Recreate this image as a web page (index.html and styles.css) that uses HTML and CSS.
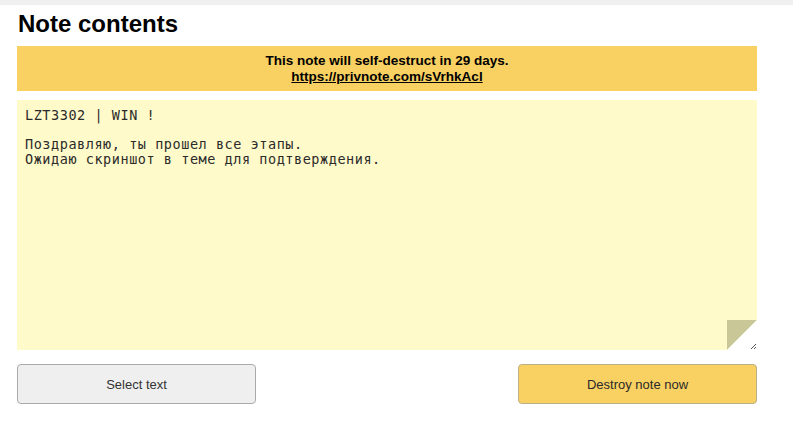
FILE: index.html
```html
<!DOCTYPE html>
<html lang="en">
<head>
    <meta charset="UTF-8">
    <meta name="viewport" content="width=device-width, initial-scale=1.0">
    <title>Note contents</title>
    <link rel="stylesheet" href="styles.css">
</head>
<body>
    <div class="topbar"></div>
    <div class="container">
        <h1>Note contents</h1>
        <div class="notice">
            <div>This note will self-destruct in 29 days.</div>
            <a href="#">https://privnote.com/sVrhkAcl</a>
        </div>
        <div class="note-wrapper">
            <textarea class="note" id="note" readonly>LZT3302 | WIN !

Поздравляю, ты прошел все этапы.
Ожидаю скриншот в теме для подтверждения.</textarea>
            <svg class="fold" width="30" height="30" viewBox="0 0 30 30">
                <polygon points="0,0 30,0 0,30" fill="#c9c697"/>
                <polygon points="30,0 30,30 0,30" fill="#ffffff"/>
                <line x1="24" y1="29" x2="29" y2="24" stroke="#555" stroke-width="1"/>
                <line x1="27" y1="29" x2="29" y2="27" stroke="#555" stroke-width="1"/>
            </svg>
        </div>
        <div class="actions">
            <button class="btn" onclick="selectText()">Select text</button>
            <button class="btn btn-destroy">Destroy note now</button>
        </div>
    </div>

    <script>
        function selectText() {
            document.getElementById('note').select();
        }
    </script>
</body>
</html>
```

FILE: styles.css
```css
* {
    margin: 0;
    padding: 0;
    box-sizing: border-box;
}

body {
    background: white;
    font-family: 'Liberation Sans', Arial, sans-serif;
    color: #000;
}

.topbar {
    height: 5px;
    background: #f0f0f0;
}

.container {
    width: 740px;
    margin-left: 17px;
}

h1 {
    font-size: 24px;
    line-height: 28px;
    font-weight: bold;
    margin: 5px 0 8px 1px;
}

.notice {
    background: #f9d162;
    text-align: center;
    font-size: 13.5px;
    font-weight: bold;
    line-height: 16px;
    padding: 7px 0 6px;
}

.notice a {
    color: #000;
    text-decoration: underline;
}

.note-wrapper {
    position: relative;
    margin-top: 9px;
    height: 250px;
}

.note {
    display: block;
    width: 100%;
    height: 100%;
    border: none;
    outline: none;
    resize: none;
    background: #fffac9;
    color: #2b2b2b;
    font-family: 'DejaVu Sans Mono', 'Liberation Mono', monospace;
    font-size: 13.5px;
    letter-spacing: 0.55px;
    line-height: 14.5px;
    padding: 8px 8px;
}

.fold {
    position: absolute;
    right: 0;
    bottom: 0;
    display: block;
}

.actions {
    display: flex;
    justify-content: space-between;
    margin-top: 14px;
}

.btn {
    width: 239px;
    height: 40px;
    border: 1px solid #aaa;
    border-radius: 4px;
    background: #efefef;
    color: #333;
    font-family: 'Liberation Sans', Arial, sans-serif;
    font-size: 13px;
    cursor: pointer;
}

.btn-destroy {
    background: #f9d162;
    border-color: #bcae86;
    color: #2a2a2a;
}
```
